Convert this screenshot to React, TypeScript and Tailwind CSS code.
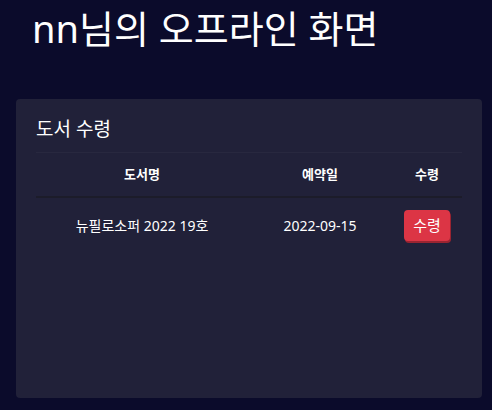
import React from "react";

const books = [{ title: "뉴필로소퍼 2022 19호", date: "2022-09-15" }];

export default function App() {
	return (
		<div
			className="min-h-[410px] bg-[#0b0b2b] text-white pl-4 pr-[10px] pb-3"
			style={{ fontFamily: '"Noto Sans", "Noto Sans CJK KR", sans-serif' }}
		>
			<h1 className="px-4 pt-[6px] text-[38px] leading-[44px] font-normal">
				nn님의 오프라인 화면
			</h1>

			{/* 수령 카드 */}
			<div className="mt-[49px] h-[299px] rounded bg-[#212139] px-5 pt-[17px]">
				<h2 className="text-[19px] leading-[27px] font-normal">도서 수령</h2>
				<table className="mt-[9px] w-full border-t border-[#28283f] text-[14px]">
					<thead>
						<tr className="h-[44px] border-b-2 border-[#1c1c2a] text-[13px]">
							<th className="w-[212px] font-bold">도서명</th>
							<th className="w-[144px] font-bold">예약일</th>
							<th className="font-bold">수령</th>
						</tr>
					</thead>
					<tbody>
						{books.map((b, i) => (
							<tr key={i} className="h-[56px]">
								<td className="text-center">{b.title}</td>
								<td className="text-center">{b.date}</td>
								<td className="text-center">
									<button className="h-[31px] px-[9px] rounded-sm bg-[#dc3545] text-[15px] text-white shadow-[1px_2px_0_#9a2431]">
										수령
									</button>
								</td>
							</tr>
						))}
					</tbody>
				</table>
			</div>
		</div>
	);
}
